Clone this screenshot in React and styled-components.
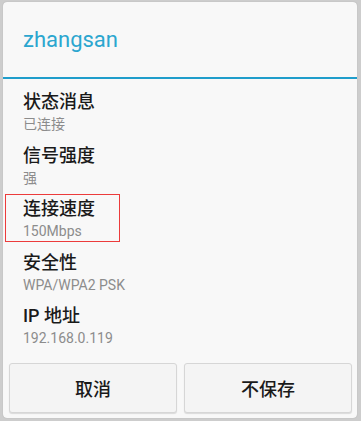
import React from 'react'
import styled, { createGlobalStyle } from 'styled-components'

const Global = createGlobalStyle`
    html, body {
        margin:0;
        padding:0;
        background:#cdcdcd;
    }
    body {
        font-family:Roboto, "Noto Sans CJK SC", sans-serif;
    }
`;

const Screen = styled.div`
    width:361px;
    height:421px;
    box-sizing:border-box;
    padding:2px 4px 3px 3px;
    background:#cdcdcd;
`;

const Dialog = styled.div`
    height:100%;
    display:flex;
    flex-direction:column;
    background:#f8f8f8;
    border-radius:4px;
    box-shadow:0 0 1px rgba(0,0,0,0.25);
    overflow:hidden;
`;

const Header = styled.div`
    height:75px;
    display:flex;
    align-items:center;
    padding-left:20px;
    border-bottom:2px solid #1f9dcb;
    font-size:22px;
    color:#2ba6cf;
    font-family:Roboto, sans-serif;
`;

const List = styled.div`
    padding-top:6px;
    flex:1;
`;

const Row = styled.div`
    position:relative;
    padding:5px 0 4.5px 20px;
    &::after{
        content:'';
        display:${p => (p.$marked ? 'block' : 'none')};
        position:absolute;
        left:2px;
        top:2px;
        width:115px;
        height:48px;
        border:1px solid #ec3b3b;
        box-sizing:border-box;
    }
`;

const Title = styled.div`
    font-size:18px;
    line-height:24px;
    color:#1a1a1a;
    font-weight:500;
    font-family:Roboto, "Noto Sans CJK SC", sans-serif;
`;

const Sub = styled.div`
    font-size:14px;
    line-height:20px;
    color:#8c8c8c;
    font-family:Roboto, "Noto Sans CJK SC", sans-serif;
`;

const Buttons = styled.div`
    display:grid;
    grid-template-columns:1fr 1fr;
    gap:7px;
    padding:0 5px 5px 6px;
`;

const Button = styled.button`
    height:50px;
    background:#f4f4f4;
    border:1px solid #d6d6d6;
    border-radius:3px;
    box-shadow:0 1px 1px rgba(0,0,0,0.12);
    font-size:18px;
    font-weight:500;
    color:#1a1a1a;
    font-family:"Noto Sans CJK SC", sans-serif;
    padding:0;
`;

const rows = [
    ['状态消息', '已连接'],
    ['信号强度', '强'],
    ['连接速度', '150Mbps', true],
    ['安全性', 'WPA/WPA2 PSK'],
    ['IP 地址', '192.168.0.119'],
];

export default function App() {
    return (
        <Screen>
            <Global />
            <Dialog>
                <Header>zhangsan</Header>
                <List>
                    {rows.map(([t, s, m]) => (
                        <Row key={t} $marked={m}>
                            <Title>{t}</Title>
                            <Sub>{s}</Sub>
                        </Row>
                    ))}
                </List>
                <Buttons>
                    <Button>取消</Button>
                    <Button>不保存</Button>
                </Buttons>
            </Dialog>
        </Screen>
    )
}
